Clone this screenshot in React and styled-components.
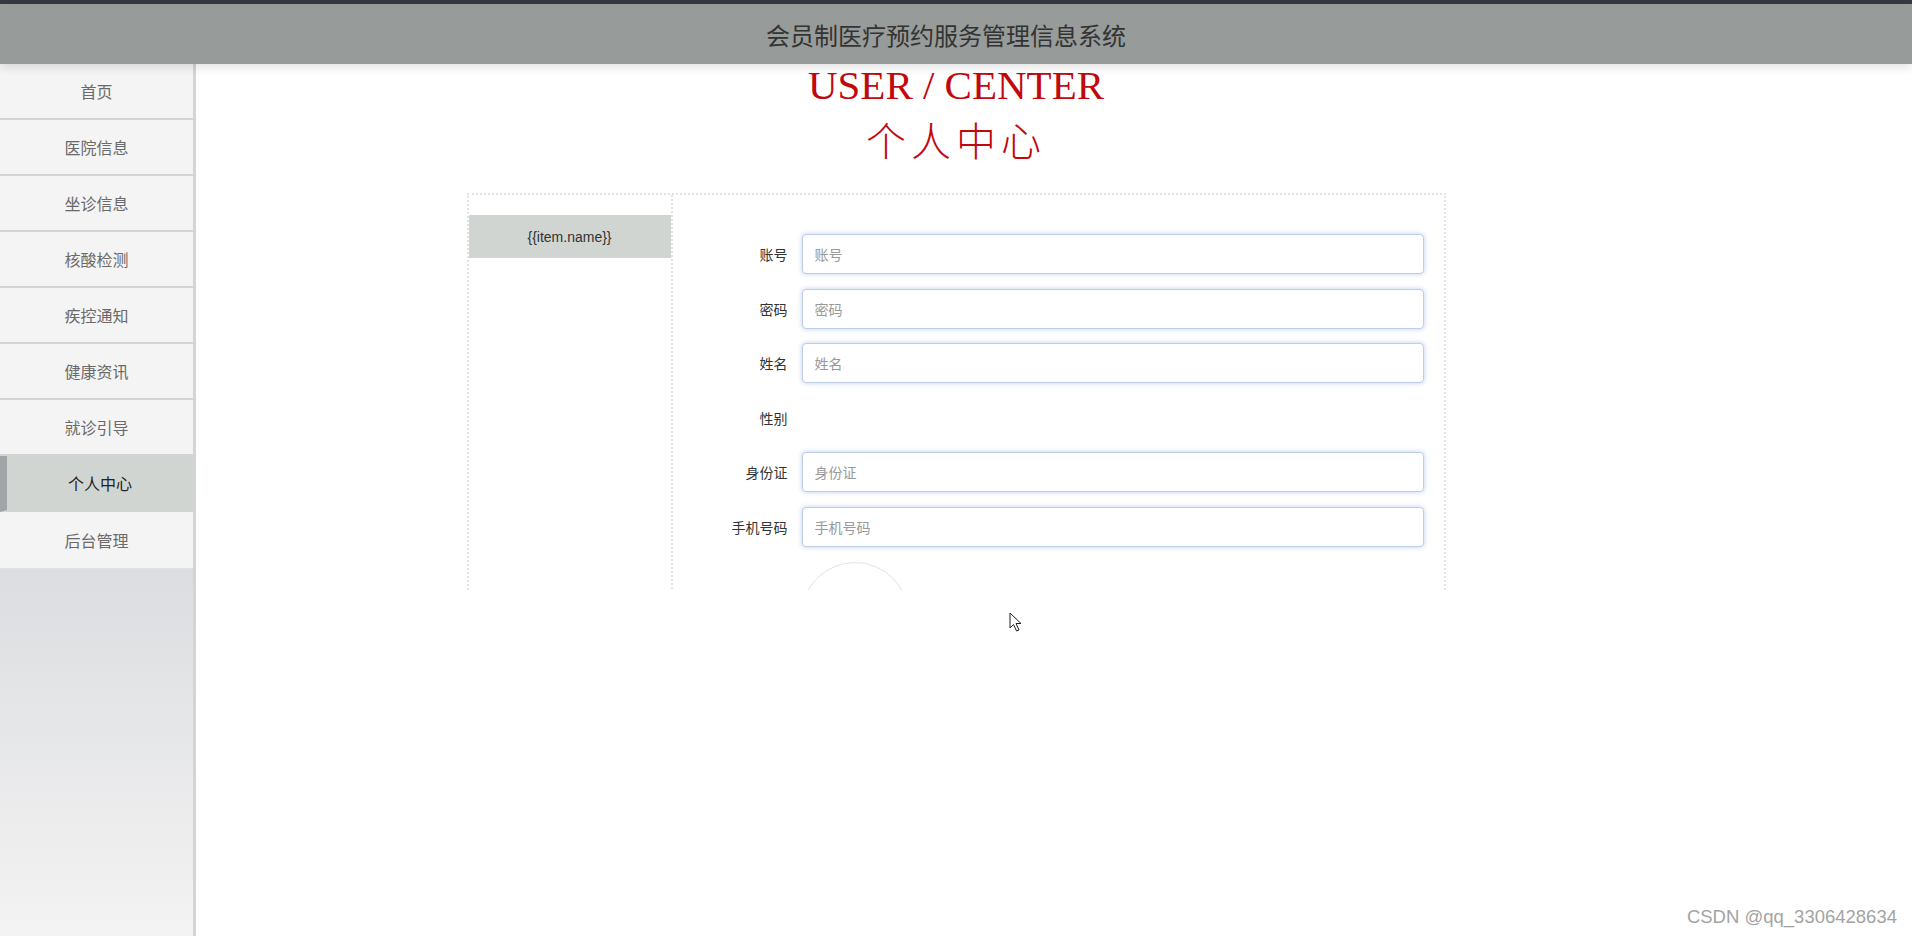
import React from "react"
import styled, { createGlobalStyle } from "styled-components"

const menu = [
  "首页",
  "医院信息",
  "坐诊信息",
  "核酸检测",
  "疾控通知",
  "健康资讯",
  "就诊引导",
  "个人中心",
  "后台管理",
]

const fields = [
  { label: "账号", input: true },
  { label: "密码", input: true },
  { label: "姓名", input: true },
  { label: "性别", input: false },
  { label: "身份证", input: true },
  { label: "手机号码", input: true },
]

const App = () => {
  return (
    <>
      <GlobalStyle />
      <Page>
        <TopStrip />
        <Header>会员制医疗预约服务管理信息系统</Header>
        <Sidebar>
          {menu.map((name) => (
            <MenuItem key={name} $active={name === "个人中心"}>
              {name}
            </MenuItem>
          ))}
        </Sidebar>
        {/* iframe content */}
        <Frame>
          <Title>USER / CENTER</Title>
          <SubTitle>个人中心</SubTitle>
          <Box>
            <LeftPanel>
              <TabItem>{"{{item.name}}"}</TabItem>
            </LeftPanel>
            <RightPanel>
              {fields.map((f) => (
                <FormRow key={f.label}>
                  <Label>{f.label}</Label>
                  {f.input && <Input placeholder={f.label} />}
                </FormRow>
              ))}
              <AvatarRow>
                <Avatar />
              </AvatarRow>
            </RightPanel>
          </Box>
        </Frame>
        <Watermark>CSDN @qq_3306428634</Watermark>
        <Cursor width="14" height="21" viewBox="0 0 14 21">
          <path
            d="M1 1 L1 16 L4.5 12.5 L7.5 19 L10 18 L7 11.5 L12 11.5 Z"
            fill="#fff"
            stroke="#222"
            strokeWidth="1"
            strokeLinejoin="round"
          />
        </Cursor>
      </Page>
    </>
  )
}
export default App

const GlobalStyle = createGlobalStyle`
  html, body {
    margin: 0;
    padding: 0;
    background: #fff;
    font-family: "Noto Sans CJK SC", "Liberation Sans", sans-serif;
  }
  * { box-sizing: border-box; }
`

const Page = styled.div`
  position: relative;
  width: 100%;
  height: 936px;
  overflow: hidden;
  background: #fff;
`

const TopStrip = styled.div`
  height: 4px;
  background: #353a41;
`

const Header = styled.div`
  position: relative;
  z-index: 3;
  height: 60px;
  display: flex;
  align-items: center;
  justify-content: center;
  padding-right: 20px;
  background: #979b99;
  color: #333;
  font-size: 24px;
  box-shadow: 0 3px 10px rgba(0, 0, 0, 0.12);
`

const Sidebar = styled.nav`
  position: absolute;
  z-index: 2;
  top: 64px;
  left: 0;
  bottom: 0;
  width: 196px;
  border-right: 3px solid #d3d4d6;
  background: linear-gradient(180deg, #f2f2f2 0%, #f2f2f2 57%, #dcdde0 58%, #f3f3f3 100%);
`

const MenuItem = styled.div`
  height: 56px;
  display: flex;
  align-items: center;
  justify-content: center;
  border-bottom: 2px solid #d2d3d4;
  background: ${(p) => (p.$active ? "#d1d5d2" : "#f4f4f4")};
  border-left: ${(p) => (p.$active ? "7px solid #a2a5a7" : "0")};
  color: ${(p) => (p.$active ? "#222" : "#6a6a6a")};
  font-size: 16px;

  &:last-child {
    border-bottom: 0;
  }
`

const Frame = styled.div`
  height: 526px;
  overflow: hidden;
  text-align: center;
`

const Title = styled.div`
  font-family: "Liberation Serif", "Noto Sans CJK SC", serif;
  font-size: 41px;
  line-height: 42px;
  color: #c1080d;
`

const SubTitle = styled.div`
  margin-top: 12px;
  font-family: "Liberation Serif", "Noto Sans CJK SC", serif;
  font-weight: 300;
  font-size: 40px;
  letter-spacing: 5px;
  line-height: 50px;
  color: #c1080d;
`

const Box = styled.div`
  width: 979px;
  margin: 25px auto 0;
  height: 420px;
  display: flex;
  border: 2px dotted #e3e3e3;
  border-bottom: 0;
  text-align: left;
`

const LeftPanel = styled.div`
  width: 204px;
  padding-top: 20px;
  border-right: 2px dotted #e3e3e3;
`

const TabItem = styled.div`
  height: 43px;
  display: flex;
  align-items: center;
  justify-content: center;
  background: #d1d5d2;
  color: #333;
  font-family: "Liberation Sans", sans-serif;
  font-size: 14px;
`

const RightPanel = styled.div`
  flex: 1;
  padding: 39px 20px 0 0;
`

const FormRow = styled.div`
  display: flex;
  align-items: center;
  height: 40px;
  margin-bottom: 14.5px;
`

const Label = styled.label`
  width: 115px;
  flex-shrink: 0;
  margin-right: 14px;
  text-align: right;
  color: #333;
  font-size: 14px;
`

const Input = styled.input`
  flex: 1;
  height: 40px;
  padding: 0 12px;
  border: 1px solid #bfcde6;
  border-radius: 4px;
  box-shadow: 0 0 5px rgba(90, 130, 210, 0.4);
  font-family: "Noto Sans CJK SC", sans-serif;
  font-size: 14px;
  color: #333;
  outline: none;

  &::placeholder {
    color: #999;
  }
`

const AvatarRow = styled.div`
  padding-left: 128px;
  padding-top: 1px;
`

const Avatar = styled.div`
  width: 108px;
  height: 108px;
  border-radius: 50%;
  border: 1px solid #e3e3e3;
`

const Watermark = styled.div`
  position: absolute;
  right: 15px;
  bottom: 8px;
  font-family: "Liberation Sans", sans-serif;
  font-size: 18.5px;
  color: #a3a3a3;
  text-shadow: 0 0 1px #fff;
`

const Cursor = styled.svg`
  position: absolute;
  left: 1009px;
  top: 612px;
`
